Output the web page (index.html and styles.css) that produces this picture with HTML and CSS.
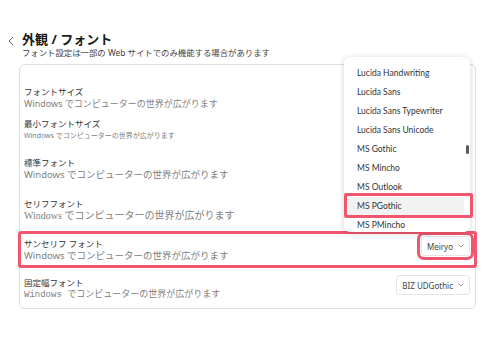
FILE: index.html
```html
<!DOCTYPE html>
<html lang="ja">
<head>
  <meta charset="UTF-8" />
  <title>外観 / フォント</title>
  <meta name="viewport" content="width=device-width, initial-scale=1.0" />
  <link rel="stylesheet" href="styles.css">
</head>
<body>
  <div class="page">

    <header class="head">
      <svg class="back" viewBox="0 0 6 10"><path d="M5 1 1 5l4 4"/></svg>
      <div>
        <h1>外観 / フォント</h1>
        <p>フォント設定は一部の Web サイトでのみ機能する場合があります</p>
      </div>
    </header>

    <section class="card">
      <div class="row">
        <div>
          <div class="label">フォントサイズ</div>
          <div class="sample sample-size">Windows でコンピューターの世界が広がります</div>
        </div>
        <div class="select">中 <svg viewBox="0 0 6 4"><path d="M.5.5 3 3 5.5.5"/></svg></div>
      </div>

      <div class="row">
        <div>
          <div class="label">最小フォントサイズ</div>
          <div class="sample sample-min">Windows でコンピューターの世界が広がります</div>
        </div>
        <div class="select">極小 <svg viewBox="0 0 6 4"><path d="M.5.5 3 3 5.5.5"/></svg></div>
      </div>

      <div class="row">
        <div>
          <div class="label">標準フォント</div>
          <div class="sample">Windows でコンピューターの世界が広がります</div>
        </div>
        <div class="select">Meiryo <svg viewBox="0 0 6 4"><path d="M.5.5 3 3 5.5.5"/></svg></div>
      </div>

      <div class="row">
        <div>
          <div class="label">セリフフォント</div>
          <div class="sample sample-serif">Windows でコンピューターの世界が広がります</div>
        </div>
        <div class="select">Yu Mincho <svg viewBox="0 0 6 4"><path d="M.5.5 3 3 5.5.5"/></svg></div>
      </div>

      <div class="row row-marked">
        <div>
          <div class="label">サンセリフ フォント</div>
          <div class="sample">Windows でコンピューターの世界が広がります</div>
        </div>
        <div class="select select-marked">Meiryo <svg viewBox="0 0 6 4"><path d="M.5.5 3 3 5.5.5"/></svg></div>
      </div>

      <div class="row row-last">
        <div>
          <div class="label">固定幅フォント</div>
          <div class="sample sample-mono">Windows でコンピューターの世界が広がります</div>
        </div>
        <div class="select">BIZ UDGothic <svg viewBox="0 0 6 4"><path d="M.5.5 3 3 5.5.5"/></svg></div>
      </div>
    </section>

    <div class="menu">
      <div class="menu-item">Lucida Handwriting</div>
      <div class="menu-item">Lucida Sans</div>
      <div class="menu-item">Lucida Sans Typewriter</div>
      <div class="menu-item">Lucida Sans Unicode</div>
      <div class="menu-item">MS Gothic</div>
      <div class="menu-item">MS Mincho</div>
      <div class="menu-item">MS Outlook</div>
      <div class="menu-item menu-item-active">MS PGothic</div>
      <div class="menu-item">MS PMincho</div>
      <div class="thumb"></div>
    </div>

  </div>
</body>
</html>
```

FILE: styles.css
```css
body {
  margin: 0;
  background: #fff;
  font-family: "Noto Sans", "Noto Sans CJK JP", sans-serif;
  color: #333;
}

.page {
  position: relative;
  padding: 31px 24px 0 8px;
}

.head {
  display: flex;
  align-items: flex-start;
  gap: 8px;
}

.back {
  width: 6px;
  height: 10px;
  margin-top: 5px;
  fill: none;
  stroke: #666;
  stroke-width: 1;
}

.head h1 {
  margin: 0;
  font-size: 13px;
  line-height: 16px;
  font-weight: 700;
  color: #1a1a1a;
}

.head p {
  margin: 0;
  font-size: 8.4px;
  line-height: 11px;
  color: #444;
}

.card {
  margin: 6px 0 0 11px;
  border: 1px solid #e0e0e0;
  border-radius: 6px;
  padding: 16px 0 4px;
  display: grid;
  grid-template-rows: 32px 39px 41px 40px 33px 38px;
  box-shadow: 0 1px 1px rgba(0,0,0,0.04);
}

.row {
  display: flex;
  justify-content: space-between;
  align-items: flex-start;
  padding: 5px 5px 0 4px;
}

.row-last {
  padding-top: 11px;
}

.row-marked {
  outline: 3px solid #f2566f;
  outline-offset: -1px;
  border-radius: 1px;
}

.label {
  font-size: 8.5px;
  line-height: 12px;
  color: #333;
}

.sample {
  font-size: 9.5px;
  line-height: 12px;
  color: #808080;
}

.sample-size {
  font-size: 9px;
}

.sample-min {
  font-size: 7px;
  line-height: 11px;
}

.sample-serif {
  font-family: "Liberation Serif", "Noto Sans CJK JP", serif;
  font-size: 10px;
}

.sample-mono {
  font-family: "Liberation Mono", "Noto Sans CJK JP", monospace;
  font-size: 9px;
}

.select {
  display: flex;
  align-items: center;
  gap: 5px;
  height: 18px;
  margin-top: -2px;
  padding: 0 5px 0 5px;
  border: 1px solid #e6e6e6;
  border-radius: 3px;
  font-size: 8px;
  color: #444;
  white-space: nowrap;
}

.select svg {
  width: 6px;
  height: 4px;
  fill: none;
  stroke: #777;
  stroke-width: 0.8;
}

.select-marked {
  outline: 3px solid #f2566f;
  outline-offset: 1px;
}

.menu {
  position: absolute;
  left: 344px;
  top: 57px;
  width: 126px;
  height: 168px;
  padding-top: 7px;
  background: #fff;
  border-radius: 6px;
  box-shadow: 0 1px 6px rgba(0,0,0,0.18);
  z-index: 2;
  font-family: Lato, "Noto Sans", sans-serif;
}

.menu-item {
  position: relative;
  height: 19px;
  line-height: 19px;
  margin: 0 6px 0 4px;
  padding-left: 9px;
  border-radius: 3px;
  font-size: 8.5px;
  color: #333;
}

.menu-item-active {
  background: #f2f2f2;
}

.menu-item-active::after {
  content: "";
  position: absolute;
  inset: -4px -9px -2px -4px;
  border: 3px solid #f2566f;
  border-radius: 2px;
}

.thumb {
  position: absolute;
  right: 1px;
  top: 88px;
  width: 3px;
  height: 9px;
  border-radius: 2px;
  background: #5a5a5a;
}
```
